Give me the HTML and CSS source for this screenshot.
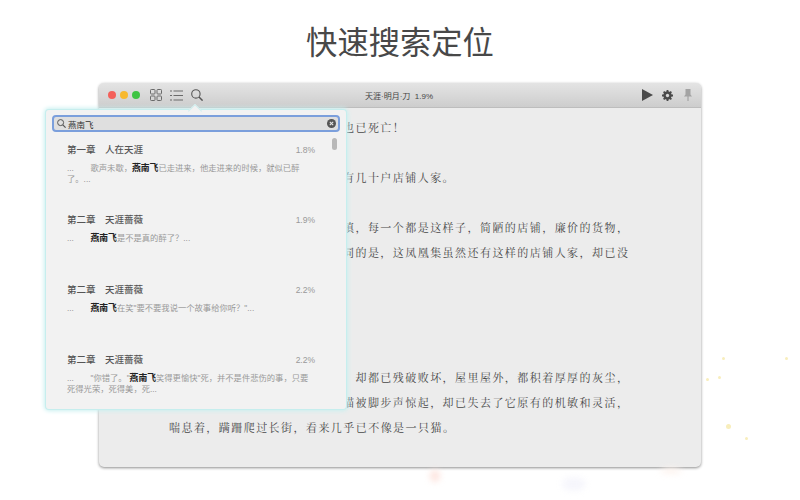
FILE: index.html
```html
<!DOCTYPE html>
<html lang="zh-CN">
<head>
<meta charset="utf-8">
<title>快速搜索定位</title>
<link rel="stylesheet" href="styles.css">
</head>
<body>
<main class="stage">
  <h1 class="headline">快速搜索定位</h1>
  <section class="window">
    <header class="toolbar">
      <div class="toolbar-left">
        <div class="lights"><i class="light red"></i><i class="light yellow"></i><i class="light green"></i></div>
        <svg width="12" height="12" viewBox="0 0 12 12" fill="none" stroke="#6a6a6a" stroke-width="1"><rect x=".5" y=".5" width="4.5" height="4.5" rx=".8"/><rect x="7" y=".5" width="4.5" height="4.5" rx=".8"/><rect x=".5" y="7" width="4.5" height="4.5" rx=".8"/><rect x="7" y="7" width="4.5" height="4.5" rx=".8"/></svg>
        <svg width="13" height="11" viewBox="0 0 13 11" fill="none" stroke="#6a6a6a" stroke-width="1"><path d="M0 1h2M3.5 1H13M0 5.5h2M3.5 5.5H13M0 10h2M3.5 10H13"/></svg>
        <svg width="12" height="12" viewBox="0 0 12 12" fill="none" stroke="#555" stroke-width="1.1"><circle cx="4.9" cy="4.9" r="4.2"/><path d="M8 8l3.6 3.6" stroke-width="1.5"/></svg>
      </div>
      <div class="doc-title">天涯·明月·刀&nbsp;&nbsp;1.9%</div>
      <div class="toolbar-right">
        <svg width="11" height="12" viewBox="0 0 11 12"><path d="M0 0l11 6L0 12z" fill="#4a4a4a"/></svg>
        <svg width="11" height="11" viewBox="0 0 12 12"><circle cx="6" cy="6" r="3.4" fill="none" stroke="#4a4a4a" stroke-width="2.4"/><path d="M6 0v12M0 6h12M1.8 1.8l8.4 8.4M10.2 1.8l-8.4 8.4" stroke="#4a4a4a" stroke-width="2"/><circle cx="6" cy="6" r="1.8" fill="#d6d6d6"/></svg>
        <svg class="pin" width="8" height="12" viewBox="0 0 8 12"><path d="M1.5 0h5v5.5L8 7.5H0l1.5-2zM3.4 7.5h1.2V12H3.4z" fill="#a3a3a3"/></svg>
      </div>
    </header>
    <article class="reader">
      <p class="line behind">也已死亡！</p>
      <p class="line behind gap">有几十户店铺人家。</p>
      <p class="line behind gap">镇，每一个都是这样子，简陋的店铺，廉价的货物，</p>
      <p class="line behind">同的是，这凤凰集虽然还有这样的店铺人家，却已没</p>
      <p class="line behind wide-gap">，却都已残破败坏，屋里屋外，都积着厚厚的灰尘，</p>
      <p class="line behind">猫被脚步声惊起，却已失去了它原有的机敏和灵活，</p>
      <p class="line">喘息着，蹒跚爬过长街，看来几乎已不像是一只猫。</p>
    </article>
  </section>
  <aside class="popover">
    <i class="arrow"></i>
    <div class="search">
      <svg width="9" height="9" viewBox="0 0 9 9" fill="none" stroke="#555"><circle cx="3.6" cy="3.6" r="3"/><path d="M5.8 5.8L8.6 8.6" stroke-width="1.2"/></svg>
      <span class="query">燕南飞</span>
      <svg class="clear" width="9" height="9" viewBox="0 0 9 9"><circle cx="4.5" cy="4.5" r="4.5" fill="#555"/><path d="M2.8 2.8l3.4 3.4M6.2 2.8L2.8 6.2" stroke="#e6e6e6" stroke-width="1.1"/></svg>
    </div>
    <i class="scroll"></i>
    <ul class="results">
      <li class="result">
        <div class="result-head"><span>第一章　人在天涯</span><span class="pct">1.8%</span></div>
        <p class="snippet">...　　歌声未歇，<b>燕南飞</b>已走进来，他走进来的时候，就似已醉了。...</p>
      </li>
      <li class="result">
        <div class="result-head"><span>第二章　天涯蔷薇</span><span class="pct">1.9%</span></div>
        <p class="snippet">...　　<b>燕南飞</b>是不是真的醉了？...</p>
      </li>
      <li class="result">
        <div class="result-head"><span>第二章　天涯蔷薇</span><span class="pct">2.2%</span></div>
        <p class="snippet">...　　<b>燕南飞</b>在笑"要不要我说一个故事给你听？"...</p>
      </li>
      <li class="result">
        <div class="result-head"><span>第二章　天涯蔷薇</span><span class="pct">2.2%</span></div>
        <p class="snippet">...　　"你错了。"<b>燕南飞</b>笑得更愉快"死，并不是件悲伤的事，只要死得光荣，死得美，死...</p>
      </li>
    </ul>
  </aside>
  <i class="speck s1"></i><i class="speck s2"></i><i class="speck s3"></i><i class="speck s4"></i><i class="speck s5"></i><i class="speck s6"></i>
  <i class="blot b1"></i><i class="blot b2"></i><i class="blot b3"></i>
</main>
</body>
</html>
```
FILE: styles.css
```css
* { box-sizing: border-box; }
html, body { margin: 0; padding: 0; }
body { background: #fff; font-family: "Liberation Sans", "Noto Sans CJK SC", sans-serif; overflow: hidden; text-spacing-trim: space-all; }
.stage { position: relative; width: 800px; height: 500px; overflow: hidden; display: flex; flex-direction: column; align-items: center; }
.headline { margin: 19px 0 0; height: 64px; font-family: "Noto Sans CJK SC", sans-serif; font-size: 31.3px; line-height: 43px; font-weight: 400; color: #484848; }
.window { width: 602px; height: 384px; flex: none; border-radius: 5px; background: #ececec; box-shadow: 0 1px 3px rgba(0,0,0,.45); overflow: hidden; display: flex; flex-direction: column; }
.toolbar { height: 25px; flex: none; display: flex; align-items: center; padding: 0 9px; background: linear-gradient(#e4e4e4, #cdcdcd); border-bottom: 1px solid #bdbdbd; position: relative; }
.toolbar-left { display: flex; align-items: center; gap: 8px; }
.lights { display: flex; gap: 4px; margin-right: 2px; }
.light { width: 8px; height: 8px; border-radius: 50%; display: block; }
.red { background: #f4605a; }
.yellow { background: #f7b92f; }
.green { background: #3fc444; }
.doc-title { position: absolute; left: 266px; top: 8px; font-size: 8px; line-height: 12px; color: #444; white-space: nowrap; }
.toolbar-right { display: flex; align-items: center; gap: 9px; margin-left: auto; }
.pin { margin-left: 2px; }
.reader { flex: 1; padding: 7px 0 0 70px; }
.line { margin: 0; white-space: nowrap; font-family: "Noto Serif CJK SC", "Noto Sans CJK SC", serif; font-size: 11px; letter-spacing: 1.45px; line-height: 25px; color: #484848; }
.behind { margin-left: 174px; }
.gap { margin-top: 25px; }
.wide-gap { margin-top: 100px; }
.popover { position: absolute; left: 46px; top: 110px; width: 300px; height: 299px; background: #f2f2f2; border-radius: 3px; box-shadow: 0 0 0 1px #c6eeee, 0 0 4px 2px #c9f0f0; padding: 5px 6px; }
.arrow { position: absolute; left: 144px; top: -4px; width: 10px; height: 10px; background: #f2f2f2; transform: rotate(45deg); border-left: 1px solid #cfeeee; border-top: 1px solid #cfeeee; }
.search { position: relative; height: 17px; border: 2px solid #7b9fdc; border-radius: 4px; background: #dfdfdf; display: flex; align-items: center; gap: 2px; padding: 0 3px; font-size: 8.5px; color: #333; }
.clear { position: absolute; right: 2px; top: 2px; }
.scroll { position: absolute; left: 286px; top: 28px; width: 5px; height: 12px; border-radius: 2.5px; background: #b8b8b8; }
.results { list-style: none; margin: 0; padding: 0 25px 0 15px; }
.result { height: 70px; padding-top: 11px; }
.result-head { display: flex; justify-content: space-between; font-size: 9.5px; line-height: 14px; font-weight: 500; color: #555; }
.pct { font-weight: 400; font-size: 8.5px; color: #999; }
.snippet { margin: 6px 0 0; font-size: 8.3px; line-height: 11px; color: #999; }
.snippet b { color: #222; font-size: 8.8px; }
.speck { position: absolute; width: 3px; height: 3px; border-radius: 50%; background: #f8eebc; }
.s1 { left: 722px; top: 357px; }
.s2 { left: 785px; top: 357px; }
.s3 { left: 706px; top: 378px; }
.s4 { left: 718px; top: 376px; }
.s5 { left: 726px; top: 424px; width: 5px; height: 5px; }
.s6 { left: 745px; top: 437px; }
.blot { position: absolute; border-radius: 50%; filter: blur(3px); }
.b1 { left: 430px; top: 470px; width: 10px; height: 12px; background: #fde4de; }
.b2 { left: 562px; top: 477px; width: 24px; height: 14px; background: #f6f6fc; }
.b3 { left: 660px; top: 468px; width: 22px; height: 6px; background: #fdf3ee; }
```
